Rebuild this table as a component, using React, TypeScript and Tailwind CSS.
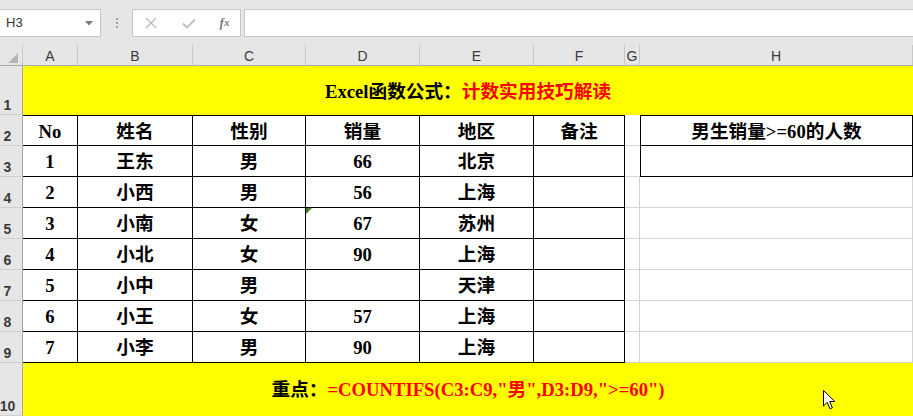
import React from 'react'

// ─── Sheet data ───────────────────────────────────────────────────────────────

const COLS = ['A', 'B', 'C', 'D', 'E', 'F', 'G', 'H']

// widths of A..H in px (row header is 23px)
const COL_W = [
  'w-[55px]',
  'w-[115px]',
  'w-[113px]',
  'w-[114px]',
  'w-[114px]',
  'w-[91px]',
  'w-[15px]',
  'w-[273px]',
]

const ROWS: string[][] = [
  ['1', '王东', '男', '66', '北京'],
  ['2', '小西', '男', '56', '上海'],
  ['3', '小南', '女', '67', '苏州'],
  ['4', '小北', '女', '90', '上海'],
  ['5', '小中', '男', '', '天津'],
  ['6', '小王', '女', '57', '上海'],
  ['7', '小李', '男', '90', '上海'],
]

const SERIF = "font-['Liberation_Serif','Noto_Sans_CJK_SC',serif]"

// ─── Little pieces ────────────────────────────────────────────────────────────

function RowHead({ n }: { n: number }) {
  return (
    <div className="flex h-full w-[23px] shrink-0 items-end justify-center border-r border-b border-r-[#a8a8a8] border-b-[#cfcfcf] bg-[#e6e6e6] pr-[7px] pb-[1px] font-['Liberation_Sans',sans-serif] text-[14px] leading-[16px] text-[#3a3a3a]">
      {n}
    </div>
  )
}

function FormulaBar() {
  return (
    <div className="flex h-[45px] items-start bg-[#e6e6e6] pt-[9px] font-['Liberation_Sans',sans-serif]">
      {/* Name box */}
      <div className="flex h-[28px] w-[101px] items-center justify-between border border-l-0 border-[#c6c6c6] bg-white pr-[7px] pl-[6px] text-[13px] text-[#333]">
        <span>H3</span>
        <svg width="8" height="5" viewBox="0 0 8 5">
          <polygon points="0,0 8,0 4,4.5" fill="#7a7a7a" />
        </svg>
      </div>

      {/* Splitter dots */}
      <div className="ml-[14px] flex h-[28px] w-[4px] flex-col items-center justify-center gap-[2px]">
        <span className="h-[2px] w-[2px] bg-[#a0a0a0]" />
        <span className="h-[2px] w-[2px] bg-[#a0a0a0]" />
        <span className="h-[2px] w-[2px] bg-[#a0a0a0]" />
      </div>

      {/* Cancel / enter / fx */}
      <div className="ml-[13px] flex h-[28px] w-[109px] items-center border border-[#c6c6c6] bg-white">
        <div className="flex w-[36px] justify-center">
          <svg width="12" height="12" viewBox="0 0 12 12">
            <path d="M1 1 L11 11 M11 1 L1 11" stroke="#bdbdbd" strokeWidth="1.4" />
          </svg>
        </div>
        <div className="flex w-[40px] justify-center">
          <svg width="14" height="11" viewBox="0 0 14 11">
            <path d="M1 5.5 L5 9.5 L13 1.5" stroke="#bdbdbd" strokeWidth="1.8" fill="none" />
          </svg>
        </div>
        <div className="flex w-[31px] justify-center font-['Liberation_Serif',serif] text-[13px] font-bold italic text-[#7a7a7a]">
          <span>f</span>
          <span className="text-[11px] leading-[18px]">x</span>
        </div>
      </div>

      {/* Formula input */}
      <div className="ml-[3px] h-[28px] flex-1 border border-r-0 border-[#c6c6c6] bg-white" />
    </div>
  )
}

function ColumnHeaders() {
  return (
    <div className="flex h-[21px] border-b border-[#ababab] bg-[#e6e6e6] font-['Liberation_Sans',sans-serif] text-[14px] leading-[16px] text-[#3a3a3a]">
      <div className="flex w-[23px] shrink-0 items-end justify-end border-r border-[#c8c8c8] pr-[4px] pb-[2px]">
        <svg width="10" height="10" viewBox="0 0 10 10">
          <polygon points="10,0 10,10 0,10" fill="#b5b5b5" />
        </svg>
      </div>
      {COLS.map((c, i) => (
        <div
          key={c}
          className={`${COL_W[i]} flex shrink-0 items-end justify-center border-r border-[#c8c8c8] pb-[1px]`}
        >
          {c}
        </div>
      ))}
    </div>
  )
}

// ─── App ──────────────────────────────────────────────────────────────────────

export default function App() {
  const cell = 'flex h-full shrink-0 items-center justify-center border-r border-b border-black pt-[2px]'

  return (
    <div className="relative h-[416px] w-[913px] overflow-hidden bg-white">
      <FormulaBar />
      <ColumnHeaders />

      <div className={`${SERIF} text-[18.67px] font-bold text-black`}>
        {/* Row 1 — title */}
        <div className="flex h-[49px]">
          <RowHead n={1} />
          <div className="flex flex-1 items-center justify-center bg-[#ffff00] pt-[3px]">
            <span>Excel函数公式：</span>
            <span className="text-[#ff0000]">计数实用技巧解读</span>
          </div>
        </div>

        {/* Row 2 — headers */}
        <div className="flex h-[31px]">
          <RowHead n={2} />
          <div className={`${cell} ${COL_W[0]} border-t`}>No</div>
          <div className={`${cell} ${COL_W[1]} border-t`}>姓名</div>
          <div className={`${cell} ${COL_W[2]} border-t`}>性别</div>
          <div className={`${cell} ${COL_W[3]} border-t`}>销量</div>
          <div className={`${cell} ${COL_W[4]} border-t`}>地区</div>
          <div className={`${cell} ${COL_W[5]} border-t`}>备注</div>
          <div className={`h-full shrink-0 border-b border-b-[#d4d4d4] ${COL_W[6]}`} />
          <div className={`${cell} ${COL_W[7]} border-t border-l`}>男生销量&gt;=60的人数</div>
        </div>

        {/* Rows 3..9 — data */}
        {ROWS.map((r, i) => (
          <div key={r[0]} className="flex h-[31px]">
            <RowHead n={i + 3} />
            <div className={`${cell} ${COL_W[0]}`}>{r[0]}</div>
            <div className={`${cell} ${COL_W[1]}`}>{r[1]}</div>
            <div className={`${cell} ${COL_W[2]}`}>{r[2]}</div>
            <div className={`${cell} ${COL_W[3]} relative`}>
              {/* error indicator in D5 */}
              {i === 2 && (
                <svg className="absolute top-0 left-0" width="6" height="6" viewBox="0 0 6 6">
                  <polygon points="0,0 6,0 0,6" fill="#3b7d23" />
                </svg>
              )}
              {r[3]}
            </div>
            <div className={`${cell} ${COL_W[4]}`}>{r[4]}</div>
            <div className={`${cell} ${COL_W[5]}`}>{''}</div>
            {i === 0 ? (
              <>
                <div className={`h-full shrink-0 border-b border-b-[#d4d4d4] ${COL_W[6]}`} />
                <div className={`${cell} ${COL_W[7]} border-l`} />
              </>
            ) : (
              <>
                <div className={`h-full shrink-0 border-r border-b border-[#d4d4d4] ${COL_W[6]}`} />
                <div className={`h-full shrink-0 border-r border-b border-[#d4d4d4] ${COL_W[7]}`} />
              </>
            )}
          </div>
        ))}

        {/* Row 10 — formula note */}
        <div className="flex h-[53px]">
          <RowHead n={10} />
          <div className="flex flex-1 items-center justify-center bg-[#ffff00]">
            <span>重点：</span>
            <span className="text-[#ff0000]">=COUNTIFS(C3:C9,"男",D3:D9,"&gt;=60")</span>
          </div>
        </div>
      </div>

      {/* Mouse pointer */}
      <svg className="absolute top-[390px] left-[823px]" width="13" height="20" viewBox="0 0 13 20">
        <path
          d="M0.5 0.5 L0.5 16 L4.2 12.4 L7 18.8 L9.4 17.8 L6.7 11.5 L11.8 11.5 Z"
          fill="#ffffff"
          stroke="#000000"
          strokeWidth="1"
          strokeLinejoin="round"
        />
      </svg>
    </div>
  )
}
